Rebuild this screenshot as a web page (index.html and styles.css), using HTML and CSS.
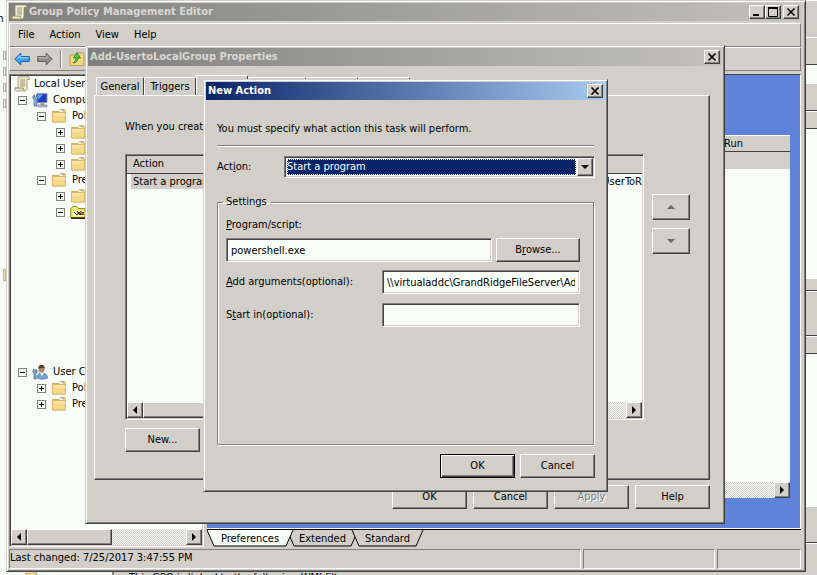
FILE: index.html
```
<!DOCTYPE html>
<html lang="en">

<head>
    <meta charset="UTF-8">
    <meta name="viewport" content="width=device-width, initial-scale=1.0">
    <title>Group Policy Management Editor</title>
    <link rel="stylesheet" href="styles.css">
</head>

<body>

    <!-- shared icons -->
    <svg class="defs" width="0" height="0" aria-hidden="true">
        <symbol id="i-scroll" viewBox="0 0 16 16">
            <path d="M4 1h10c1.500 0 2 1 1.500 2.500H13V12c0 2-1 3-2.500 3H2.500C1 15 .5 13.500 1 12h3z" fill="#f4efd4" stroke="#8f875e" stroke-width=".8" />
            <path d="M1 12h8.500c0 1.500.4 2.500 1.200 3" fill="#e0d7ac" stroke="#8f875e" stroke-width=".8" />
            <path d="M6 4h5M6 6h5M6 8h5M6 10h5" stroke="#8b856c" stroke-width=".9" />
        </symbol>
        <symbol id="i-folder" viewBox="0 0 16 16">
            <path d="M1.500 3.500h7l1-2h4l1 2v10.500h-13z" fill="#f0cc75" stroke="#c9a04c" stroke-width=".8" />
            <path d="M8.500 2.500h4v1.500h-4z" fill="#fffdf0" />
            <path d="M11 2.200h1.500v1H11z" fill="#5c9bd0" />
            <path d="M1.500 4.500h13v9.500h-13z" fill="#f6d889" stroke="#d9b35f" stroke-width=".8" />
            <path d="M2 5h12v3H2z" fill="#fae3a2" />
        </symbol>
        <symbol id="i-sheet-folder" viewBox="0 0 16 16">
            <path d="M.7 13.500V5l2-2.500h4l1.500 2H15v9z" fill="#f5ed6a" stroke="#8c8a2c" />
            <path d="M3 7h11v5H3z" fill="#fbf7cf" />
            <path d="M4 8l3 3 2-3 2 3V7M7 7l3 4" stroke="#111" fill="none" />
            <path d="M11 8h3v3h-3z" fill="#d8442b" />
            <path d="M1 14.200h15" stroke="#111" stroke-width="1.400" />
        </symbol>
        <symbol id="i-computer" viewBox="0 0 16 16">
            <path d="M5 1.500h10v9H5z" fill="#1c3fc4" stroke="#8f9aae" />
            <path d="M6 2.500h5L6 8z" fill="#6fa4f4" />
            <path d="M9 11h3v2H9zM6 13h9v2H6z" fill="#c3c8d2" stroke="#6e7788" stroke-width=".6" />
            <path d="M1 4v2.500h1L2 14h3V6.500h1V4L4.500 3v2h-2V3z" fill="#8cb1da" stroke="#3c5f90" stroke-width=".7" />
        </symbol>
        <symbol id="i-user" viewBox="0 0 16 16">
            <path d="M5 14c0-3.500 2-5 5-5s5.500 1.500 5.500 5c-3 1.500-7.500 1.500-10.500 0z" fill="#72a6d8" stroke="#3f6fa6" stroke-width=".7" />
            <path d="M8 9l2 3 2-3z" fill="#fff" />
            <circle cx="9.500" cy="5.500" r="3" fill="#b98a60" />
            <path d="M6.500 5C6 2 7.500.7 9.500.7S13 2 12.700 5c-1-1.500-4-1.500-6.200 0z" fill="#5a4126" />
            <path d="M1 6v2.500h1V15h2V8.500h1V6L4 5v2H2V5z" fill="#8cb1da" stroke="#3c5f90" stroke-width=".7" />
        </symbol>
        <symbol id="i-close" viewBox="0 0 10 10">
            <path d="M1.500 1.500l7 7M8.500 1.500l-7 7" stroke="#000" stroke-width="1.700" />
        </symbol>
        <symbol id="i-left" viewBox="0 0 8 8">
            <path d="M6 0v8L2 4z" />
        </symbol>
        <symbol id="i-right" viewBox="0 0 8 8">
            <path d="M2 0v8l4-4z" />
        </symbol>
        <symbol id="i-up" viewBox="0 0 8 4">
            <path d="M0 4h8L4 0z" />
        </symbol>
        <symbol id="i-down" viewBox="0 0 8 4">
            <path d="M0 0h8L4 4z" />
        </symbol>
    </svg>

    <!-- window behind the editor -->
    <div class="backdrop">
        <div class="back-left">
            <span class="back-letter">m</span>
            <i></i><i></i><i></i><i></i>
            <b></b>
        </div>
        <div class="back-right">
            <i class="face s37"></i>
            <i class="face s28 dark"></i>
            <i class="s18"></i>
            <i class="face s28 dark"></i>
            <i class="face s18 dark"></i>
            <i class="s149"></i>
            <i class="face s13 dark"></i>
            <i class="face s45 dark"></i>
            <i class="face s18 dark"></i>
            <i class="s152"></i>
            <i class="face s37 dark"></i>
            <i class="face rest"></i>
        </div>
        <div class="back-bottom">
            <div class="back-tree"><svg width="14" height="14"><use href="#i-folder" /></svg></div>
            <div class="back-text">This GPO is linked to the following WMI filter:</div>
        </div>
    </div>

    <main class="window editor">
        <header class="titlebar inactive">
            <svg width="16" height="16"><use href="#i-scroll" /></svg>
            <h1>Group Policy Management Editor</h1>
            <div class="caption-buttons">
                <button aria-label="Minimize"><svg width="10" height="10"><path d="M1 8h6" stroke="#000" stroke-width="2" /></svg></button>
                <button aria-label="Maximize"><svg width="10" height="10"><path d="M.5 1v8.500h9V1" fill="none" stroke="#000" /><path d="M0 1h10" stroke="#000" stroke-width="2" /></svg></button>
                <button class="apart" aria-label="Close"><svg width="10" height="10"><use href="#i-close" /></svg></button>
            </div>
        </header>

        <nav class="menubar">
            <button>File</button>
            <button>Action</button>
            <button>View</button>
            <button>Help</button>
        </nav>

        <div class="toolbar">
            <button aria-label="Back">
                <svg width="16" height="14" viewBox="0 0 16 14"><path d="M.8 7l6-6v3.500h8.500v5H6.800V13z" fill="#3aa5ee" stroke="#1c62a8" /><path d="M3 6.500l3-3v2.200h8.500" fill="none" stroke="#a5dcff" /></svg>
            </button>
            <button aria-label="Forward">
                <svg width="16" height="14" viewBox="0 0 16 14"><path d="M15.200 7l-6-6v3.500H.7v5h8.500V13z" fill="#8e8e8c" stroke="#5f5f5d" /><path d="M1.500 5.700h8.500V3.500" fill="none" stroke="#bdbdbb" /></svg>
            </button>
            <span class="separator"></span>
            <button aria-label="Up one level">
                <svg width="16" height="16" viewBox="0 0 16 16"><path d="M1 4h6l1-2h6l1 2v10.500H1z" fill="#f4d680" stroke="#b98d38" stroke-width=".8" /><path d="M4 12c4-.5 5-2.500 5-5h2.500L8 1.500 4.500 7H7c0 2-1 3.500-3 5z" fill="#4cc43c" stroke="#257d1d" stroke-width=".8" /></svg>
            </button>
        </div>

        <div class="panes">
            <section class="tree-pane sunken">
                <ul class="tree">
                    <li>
                        <div class="node"><svg><use href="#i-scroll" /></svg><span>Local Users and Groups</span></div>
                        <ul>
                            <li>
                                <div class="node"><button class="toggle minus" aria-label="Collapse"></button><svg><use href="#i-computer" /></svg><span>Computer Configuration</span></div>
                                <ul>
                                    <li>
                                        <div class="node"><button class="toggle minus" aria-label="Collapse"></button><svg><use href="#i-folder" /></svg><span>Policies</span></div>
                                        <ul>
                                            <li class="node"><button class="toggle" aria-label="Expand"></button><svg><use href="#i-folder" /></svg></li>
                                            <li class="node"><button class="toggle" aria-label="Expand"></button><svg><use href="#i-folder" /></svg></li>
                                            <li class="node"><button class="toggle" aria-label="Expand"></button><svg><use href="#i-folder" /></svg></li>
                                        </ul>
                                    </li>
                                    <li>
                                        <div class="node"><button class="toggle minus" aria-label="Collapse"></button><svg><use href="#i-folder" /></svg><span>Preferences</span></div>
                                        <ul class="open-branch">
                                            <li class="node"><button class="toggle" aria-label="Expand"></button><svg><use href="#i-folder" /></svg></li>
                                            <li class="node"><button class="toggle minus" aria-label="Collapse"></button><svg><use href="#i-sheet-folder" /></svg></li>
                                        </ul>
                                    </li>
                                </ul>
                            </li>
                            <li>
                                <div class="node"><button class="toggle minus" aria-label="Collapse"></button><svg><use href="#i-user" /></svg><span>User Configuration</span></div>
                                <ul>
                                    <li class="node"><button class="toggle" aria-label="Expand"></button><svg><use href="#i-folder" /></svg><span>Policies</span></li>
                                    <li class="node"><button class="toggle" aria-label="Expand"></button><svg><use href="#i-folder" /></svg><span>Preferences</span></li>
                                </ul>
                            </li>
                        </ul>
                    </li>
                </ul>
                <div class="scrollbar">
                    <button aria-label="Scroll left"><svg width="8" height="8"><use href="#i-left" /></svg></button>
                    <span class="thumb"></span>
                    <button class="end" aria-label="Scroll right"><svg width="8" height="8"><use href="#i-right" /></svg></button>
                </div>
            </section>

            <section class="result-pane">
                <div class="canvas">
                    <div class="result-list">
                        <div class="result-head"><span>Run</span></div>
                        <div class="result-row"></div>
                        <div class="scrollbar">
                            <button class="end" aria-label="Scroll right"><svg width="8" height="8"><use href="#i-right" /></svg></button>
                        </div>
                    </div>
                </div>
                <div class="sheet-tabs">
                    <button class="active">
                        <svg viewBox="0 0 86 17" preserveAspectRatio="none"><path d="M0 0l7 16h72l7-16" /></svg>
                        <span>Preferences</span>
                    </button>
                    <button>
                        <svg viewBox="0 0 71 17" preserveAspectRatio="none"><path d="M0 0l7 16h57l7-16" /></svg>
                        <span>Extended</span>
                    </button>
                    <button>
                        <svg viewBox="0 0 71 17" preserveAspectRatio="none"><path d="M0 0l7 16h57l7-16" /></svg>
                        <span>Standard</span>
                    </button>
                </div>
            </section>
        </div>

        <footer class="statusbar">
            <span class="message">Last changed: 7/25/2017 3:47:55 PM</span>
            <span class="field"></span>
            <span class="field narrow"></span>
        </footer>
    </main>

    <section class="window properties" role="dialog" aria-label="Add-UsertoLocalGroup Properties">
        <header class="titlebar inactive">
            <h2>Add-UsertoLocalGroup Properties</h2>
            <div class="caption-buttons">
                <button aria-label="Close"><svg width="10" height="10"><use href="#i-close" /></svg></button>
            </div>
        </header>

        <div class="tabs">
            <button>General</button>
            <button>Triggers</button>
            <button class="active">Actions</button>
            <button class="wide" aria-label="Conditions"></button>
            <button aria-label="Settings"></button>
            <button aria-label="History"></button>
        </div>

        <div class="tab-page">
            <p>When you create</p>
            <div class="actions-area">
                <div class="listview sunken">
                    <table>
                        <thead>
                            <tr>
                                <th>Action</th>
                                <th></th>
                            </tr>
                        </thead>
                        <tbody>
                            <tr>
                                <td><span class="selected">Start a program</span></td>
                                <td class="details">UserToR</td>
                            </tr>
                        </tbody>
                    </table>
                    <div class="scrollbar">
                        <button aria-label="Scroll left"><svg width="8" height="8"><use href="#i-left" /></svg></button>
                        <span class="thumb long"></span>
                        <button class="end" aria-label="Scroll right"><svg width="8" height="8"><use href="#i-right" /></svg></button>
                    </div>
                </div>
                <div class="order-buttons">
                    <button class="btn" aria-label="Move up"><svg width="8" height="4"><use href="#i-up" /></svg></button>
                    <button class="btn" aria-label="Move down"><svg width="8" height="4"><use href="#i-down" /></svg></button>
                </div>
            </div>
            <button class="btn">New...</button>
        </div>

        <div class="dialog-buttons">
            <button class="btn">OK</button>
            <button class="btn">Cancel</button>
            <button class="btn" disabled>Apply</button>
            <button class="btn">Help</button>
        </div>
    </section>

    <form class="window new-action" role="dialog" aria-label="New Action">
        <header class="titlebar">
            <h2>New Action</h2>
            <div class="caption-buttons">
                <button type="button" aria-label="Close"><svg width="10" height="10"><use href="#i-close" /></svg></button>
            </div>
        </header>

        <div class="form-body">
            <p>You must specify what action this task will perform.</p>
            <hr>
            <div class="action-row">
                <label for="action">Act<u>i</u>on:</label>
                <div class="combo sunken">
                    <select id="action">
                        <option>Start a program</option>
                    </select>
                    <span class="drop"><svg width="8" height="4"><use href="#i-down" /></svg></span>
                </div>
            </div>

            <fieldset>
                <legend>Settings</legend>
                <label for="program"><u>P</u>rogram/script:</label>
                <div class="program-row">
                    <input class="sunken" id="program" type="text" value="powershell.exe">
                    <button type="button" class="btn">B<u>r</u>owse...</button>
                </div>
                <div class="option-row">
                    <label for="arguments"><u>A</u>dd arguments(optional):</label>
                    <input class="sunken" id="arguments" type="text" value="\\virtualaddc\GrandRidgeFileServer\Add">
                </div>
                <div class="option-row">
                    <label for="start-in">S<u>t</u>art in(optional):</label>
                    <input class="sunken" id="start-in" type="text">
                </div>
            </fieldset>

            <div class="form-buttons">
                <button type="button" class="btn default">OK</button>
                <button type="button" class="btn">Cancel</button>
            </div>
        </div>
    </form>

</body>

</html>
```
FILE: styles.css
```
:root {
    --face: #d1cfc8;
    --light: #f9fdf8;
    --shadow: #808080;
    --dark: #404040;
    --blue: #5f83d9;
    --navy: #0a246a;
}

* {
    box-sizing: border-box;
}

body {
    margin: 0;
    height: 100vh;
    position: relative;
    overflow: hidden;
    background: var(--face);
    color: #000;
    font: 11px/16px "DejaVu Sans Condensed", "DejaVu Sans", sans-serif;
}

button,
input,
select {
    font: inherit;
    color: inherit;
    margin: 0;
    padding: 0;
    border: 0;
    border-radius: 0;
    background: none;
}

p,
h1,
h2,
ul {
    margin: 0;
    padding: 0;
    list-style: none;
}

svg {
    display: block;
    flex: none;
}

.defs {
    position: absolute;
}

/* ---- backdrop ---- */

.backdrop {
    position: absolute;
    inset: 0;
}

.back-left {
    position: absolute;
    inset: 0 auto 0 0;
    width: 6px;
    padding-top: 11px;
    overflow: hidden;
    background: var(--light);
}

.back-letter {
    display: block;
    margin-left: -6px;
    margin-bottom: 24px;
}

.back-left i {
    display: block;
    height: 9px;
    margin: 0 0 7px 3px;
    border: 1px solid #a9aaa4;
}

.back-left b {
    display: block;
    height: 12px;
    margin: 161px 0 0 3px;
    background: #f6e6b8;
    border: 1px solid #cfb06a;
}

.back-right {
    position: absolute;
    inset: 0 0 0 auto;
    width: 12px;
    display: flex;
    flex-direction: column;
    background: var(--light);
}

.back-right .face {
    background: var(--face);
    border-top: 1px solid #fff;
}

.back-right .dark {
    border-bottom: 1px solid var(--dark);
}

.s13 { height: 13px; }
.s18 { height: 18px; }
.s28 { height: 28px; }
.s37 { height: 37px; }
.s45 { height: 45px; }
.s149 { height: 149px; }
.s152 { height: 152px; }
.rest { flex: 1; }

.back-bottom {
    position: absolute;
    inset: auto 0 0 0;
    height: 5px;
    display: flex;
    overflow: hidden;
}

.back-tree {
    width: 114px;
    padding-left: 24px;
    background: var(--light);
    border-right: 2px solid var(--shadow);
}

.back-text {
    padding-left: 15px;
}

/* ---- windows ---- */

.window {
    position: absolute;
    display: flex;
    flex-direction: column;
    padding: 2px;
    background: var(--face);
    border: 1px solid;
    border-color: var(--face) var(--dark) var(--dark) var(--face);
    box-shadow: inset 1px 1px 0 #fff, inset -1px -1px 0 var(--shadow);
}

.sunken {
    border: 1px solid;
    border-color: var(--shadow) #fff #fff var(--shadow);
    box-shadow: inset 1px 1px 0 var(--dark), inset -1px -1px 0 var(--face);
    background: var(--light);
}

.titlebar {
    flex: none;
    height: 18px;
    display: flex;
    align-items: center;
    padding: 0 2px;
    color: #fff;
    background: linear-gradient(90deg, var(--navy), #a6caf0);
}

.titlebar.inactive {
    color: #dad8d1;
    background: linear-gradient(90deg, #808080, #c2c1bc);
}

.titlebar h1,
.titlebar h2 {
    flex: 1;
    font-size: 11px;
    font-weight: bold;
    white-space: nowrap;
}

.titlebar h1 {
    padding-left: 2px;
}

.caption-buttons {
    display: flex;
}

.caption-buttons button {
    width: 16px;
    height: 14px;
    display: grid;
    place-items: center;
}

.caption-buttons .apart {
    margin-left: 2px;
}

.btn,
.caption-buttons button,
.scrollbar button,
.thumb,
.drop {
    background: var(--face);
    border: 1px solid;
    border-color: #fff var(--dark) var(--dark) #fff;
    box-shadow: inset -1px -1px 0 var(--shadow);
}

.btn {
    width: 75px;
    height: 24px;
}

.btn:disabled {
    color: var(--shadow);
    text-shadow: 1px 1px 0 #fff;
}

.btn.default {
    border-color: #000;
    box-shadow: inset 1px 1px 0 #fff, inset -1px -1px 0 var(--dark), inset -2px -2px 0 var(--shadow);
}

.scrollbar {
    height: 16px;
    display: flex;
    background: repeating-conic-gradient(var(--face) 0 25%, var(--light) 0 50%) 0 0 / 2px 2px;
}

.scrollbar button {
    width: 16px;
    display: grid;
    place-items: center;
}

.scrollbar .end {
    margin-left: auto;
}

.thumb {
    width: 85px;
}

.thumb.long {
    width: 400px;
}

/* ---- editor ---- */

.editor {
    inset: 0 11px 3px 6px;
    padding-right: 4px;
}

.menubar,
.toolbar {
    flex: none;
    display: flex;
    align-items: center;
    height: 24px;
    border: 1px solid;
    border-color: #fff var(--shadow) var(--shadow) #fff;
}

.menubar {
    margin-top: 2px;
    padding-left: 8px;
    gap: 15px;
}

.toolbar {
    padding-left: 4px;
    gap: 7px;
}

.separator {
    width: 2px;
    height: 18px;
    border-left: 1px solid var(--shadow);
    border-right: 1px solid #fff;
}

.panes {
    flex: 1;
    min-height: 0;
    display: flex;
    gap: 3px;
    margin-top: 3px;
}

.tree-pane {
    width: 195px;
    flex: none;
    display: flex;
    flex-direction: column;
    padding: 1px;
}

.tree {
    flex: 1;
    overflow: hidden;
}

.tree ul ul {
    padding-left: 19px;
}

.node {
    height: 16px;
    display: flex;
    align-items: center;
    gap: 4px;
    white-space: nowrap;
}

.tree > li > .node {
    padding-left: 3px;
}

.tree ul .node {
    padding-left: 7px;
    gap: 5px;
}

.node svg {
    width: 16px;
    height: 16px;
}

.open-branch {
    margin-bottom: 144px;
}

.toggle {
    flex: none;
    width: 9px;
    height: 9px;
    border: 1px solid var(--shadow);
    background:
        linear-gradient(#000, #000) center / 5px 1px no-repeat,
        linear-gradient(#000, #000) center / 1px 5px no-repeat;
}

.toggle.minus {
    background: linear-gradient(#000, #000) center / 5px 1px no-repeat;
}

.result-pane {
    flex: 1;
    display: flex;
    flex-direction: column;
}

.canvas {
    flex: 1;
    display: flex;
    padding: 60px 10px 30px;
    background: var(--blue);
    border-top: 1px solid var(--dark);
    border-right: 1px solid #fff;
    border-bottom: 1px solid #fff;
}

.result-list {
    flex: 1;
    display: flex;
    flex-direction: column;
    background: var(--light);
}

.result-head {
    height: 17px;
    display: flex;
    justify-content: flex-end;
    background: var(--face);
    border-top: 1px solid #fff;
    border-bottom: 1px solid var(--dark);
}

.result-head span {
    width: 66px;
}

.result-row {
    height: 17px;
    background: var(--face);
}

.result-list .scrollbar {
    margin-top: auto;
}

.sheet-tabs {
    display: flex;
    height: 18px;
    border-top: 1px solid #000;
}

.sheet-tabs button {
    position: relative;
    z-index: 1;
    width: 71px;
    height: 17px;
    margin-left: -6px;
}

.sheet-tabs .active {
    z-index: 2;
    width: 86px;
    margin-left: 0;
}

.sheet-tabs svg {
    position: absolute;
    inset: 0;
    width: 100%;
    height: 100%;
    fill: var(--face);
    stroke: #000;
    overflow: visible;
}

.sheet-tabs .active svg {
    fill: var(--light);
}

.sheet-tabs span {
    position: relative;
}

.statusbar {
    flex: none;
    height: 20px;
    display: flex;
    gap: 2px;
    margin-top: 2px;
}

.statusbar span {
    border: 1px solid;
    border-color: var(--shadow) #fff #fff var(--shadow);
}

.message {
    flex: 1;
}

.field {
    width: 132px;
}

.field.narrow {
    width: 84px;
}

/* ---- properties dialog ---- */

.properties {
    left: 85px;
    top: 45px;
    width: 640px;
    padding-bottom: 14px;
}

.tabs {
    display: flex;
    align-items: flex-end;
    height: 29px;
    padding: 0 8px;
}

.tabs button {
    width: 52px;
    height: 18px;
    border: 1px solid;
    border-color: #fff var(--dark) transparent #fff;
    border-bottom: 0;
    border-radius: 2px 2px 0 0;
}

.tabs button:first-child {
    width: 48px;
}

.tabs .active {
    height: 20px;
}

.tabs .wide {
    width: 58px;
}

.tab-page {
    margin: 0 12px 0 6px;
    padding: 23px 19px 27px 30px;
    border: 1px solid;
    border-color: #fff var(--dark) var(--dark) #fff;
    box-shadow: inset -1px -1px 0 var(--shadow);
}

.actions-area {
    display: flex;
    gap: 8px;
    margin: 19px 0 8px;
}

.listview {
    flex: 1;
    height: 266px;
    display: flex;
    flex-direction: column;
    padding: 1px;
}

.listview table {
    width: 100%;
    border-collapse: collapse;
}

.listview th {
    height: 17px;
    padding: 0 6px;
    text-align: left;
    font-weight: normal;
    background: var(--face);
    border-bottom: 1px solid var(--dark);
}

.listview td {
    height: 17px;
    padding: 0 4px;
}

.listview .details {
    width: 38px;
    padding: 0;
}

.selected {
    padding: 1px 2px;
    background: var(--face);
}

.listview .scrollbar {
    margin-top: auto;
}

.order-buttons {
    display: flex;
    flex-direction: column;
    gap: 8px;
    padding-top: 40px;
}

.order-buttons .btn {
    width: 38px;
    height: 26px;
    display: grid;
    place-items: center;
    fill: #666;
}

.dialog-buttons {
    display: flex;
    justify-content: flex-end;
    gap: 6px;
    padding: 5px 12px 0;
}

/* ---- new action dialog ---- */

.new-action {
    left: 203px;
    top: 79px;
    width: 405px;
}

.form-body {
    padding: 21px 10px 11px 11px;
}

.form-body hr {
    height: 2px;
    margin: 8px 1px 9px 0;
    border: 0;
    border-top: 1px solid var(--shadow);
    border-bottom: 1px solid #fff;
}

.action-row,
.option-row {
    display: flex;
    align-items: center;
}

.action-row label {
    width: 67px;
}

.combo {
    flex: 1;
    height: 22px;
    display: flex;
    padding: 1px;
}

.combo select {
    flex: 1;
    appearance: none;
    margin: 1px;
    color: #fff;
    background: var(--navy);
    outline: 1px dotted var(--light);
    outline-offset: -1px;
}

.drop {
    width: 16px;
    display: grid;
    place-items: center;
}

fieldset {
    min-height: 251px;
    margin: 16px 1px 9px 0;
    padding: 7px 13px 0 8px;
    border: 1px solid var(--shadow);
    box-shadow: 1px 1px 0 #fff, inset 1px 1px 0 #fff;
}

legend {
    padding: 0 4px 0 3px;
    margin-left: -3px;
}

fieldset label {
    display: block;
}

.program-row {
    display: flex;
    gap: 4px;
    margin: 5px 0 8px;
}

.program-row input {
    flex: 1;
    min-width: 0;
}

.program-row .btn {
    width: 84px;
}

input {
    height: 24px;
    padding: 0 4px;
}

.option-row {
    margin-bottom: 9px;
}

.option-row label {
    flex: 1;
}

.option-row input {
    width: 198px;
}

.form-buttons {
    display: flex;
    justify-content: flex-end;
    gap: 5px;
}
```
